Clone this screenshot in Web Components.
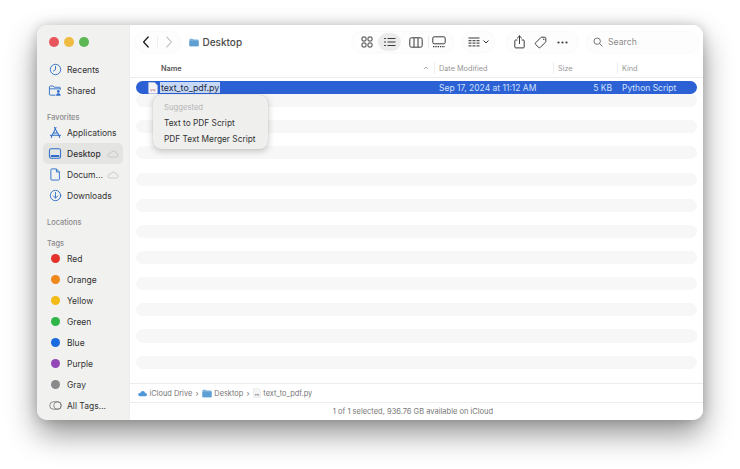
<!DOCTYPE html>
<html lang="en"><head><meta charset="utf-8"><title>Finder</title>
<style>
html,body{margin:0;height:100%;background:#fff;overflow:hidden}
body{padding:25px 37px 49px;box-sizing:border-box;font-family:Inter,"Liberation Sans",sans-serif;color:#2f2f2f}
</style></head><body>
<finder-window>
  <finder-sidebar slot="sidebar">
    <side-item icon="clock">Recents</side-item>
    <side-item icon="shared">Shared</side-item>
    <side-heading>Favorites</side-heading>
    <side-item icon="apps">Applications</side-item>
    <side-item icon="desktop" active cloud>Desktop</side-item>
    <side-item icon="doc" cloud>Docum...</side-item>
    <side-item icon="download">Downloads</side-item>
    <side-heading>Locations</side-heading>
    <side-heading>Tags</side-heading>
    <side-item tag="#e5322a">Red</side-item>
    <side-item tag="#f0891b">Orange</side-item>
    <side-item tag="#f2bb16">Yellow</side-item>
    <side-item tag="#2fb548">Green</side-item>
    <side-item tag="#1a6be0">Blue</side-item>
    <side-item tag="#9346b8">Purple</side-item>
    <side-item tag="#8a8a8c">Gray</side-item>
    <side-item icon="alltags">All Tags...</side-item>
  </finder-sidebar>
  <finder-toolbar slot="main"></finder-toolbar>
  <list-header slot="main"></list-header>
  <file-list slot="main"></file-list>
  <path-bar slot="main"></path-bar>
  <status-bar slot="main">1 of 1 selected, 936.76 GB available on iCloud</status-bar>
</finder-window>
<script>
const def=(n,html)=>{customElements.define(n,class extends HTMLElement{
  connectedCallback(){ if(this.shadowRoot) return; const r=this.attachShadow({mode:'open'}); r.innerHTML=typeof html==='function'?html(this):html; }
});};
const py=(w,h,c)=>`<svg viewBox="0 0 10 12" width="${w}" height="${h}" fill="none"><path d="M.6.5h6L9.4 3.2V11q0 .5-.5.5H1.1q-.5 0-.5-.5z" fill="#f5f5f7" stroke="#d6d6da" stroke-width=".5"/><path d="M2.6 7.2l.9 2 .9-2M5.4 7.2l.9 2 .9-2" stroke="${c}" stroke-width=".7"/></svg>`;
const I={
clock:'<svg viewBox="0 0 14 14" width="13" height="13" fill="none" stroke="#2f6fc9" stroke-width="1"><circle cx="7" cy="7" r="5.6"/><path d="M7 3.6V7.2L4.8 8.6" stroke-linecap="round"/></svg>',
shared:'<svg viewBox="0 0 14 14" width="14" height="13" fill="none" stroke="#2f6fc9" stroke-width="1"><path d="M1 11.5V3.2q0-1 1-1h3l1.2 1.3h5.6q1 0 1 1V6"/><path d="M1 5.2h12"/><path d="M1 11.5q0 .5 1 .5h5.6"/><circle cx="10.6" cy="8" r="1.5" fill="#2f6fc9" stroke="none"/><path d="M8 12.6q.3-2.8 2.6-2.8t2.6 2.8z" fill="#2f6fc9" stroke="none"/></svg>',
apps:'<svg viewBox="0 0 14 14" width="13" height="13" fill="none" stroke="#2f6fc9" stroke-width="1.1" stroke-linecap="round"><path d="M7.6 1.5 3.4 10M5.9 1.5 10.6 10M1.5 10h11M3.4 10l-1 2.4M10.6 10l1 2.4M4.5 7.5h5"/></svg>',
desktop:'<svg viewBox="0 0 14 14" width="14" height="13" fill="none" stroke="#2f6fc9" stroke-width="1.1"><rect x="1" y="2" width="12" height="10" rx="1.8"/><rect x="2.4" y="8.6" width="9.2" height="2.2" fill="#2f6fc9" stroke="none" rx=".4"/></svg>',
doc:'<svg viewBox="0 0 14 14" width="13" height="13" fill="none" stroke="#2f6fc9" stroke-width="1" stroke-linejoin="round"><path d="M3 1h5l3.2 3.3V12q0 1-1 1H3q-1 0-1-1V2q0-1 1-1z"/><path d="M8 1v3.3h3.2"/></svg>',
download:'<svg viewBox="0 0 14 14" width="13" height="13" fill="none" stroke="#2f6fc9" stroke-width="1" stroke-linecap="round" stroke-linejoin="round"><circle cx="7" cy="7" r="5.6"/><path d="M7 3.7v6M4.8 7.5 7 9.8l2.2-2.3"/></svg>',
alltags:'<svg viewBox="0 0 14 10" width="13" height="9" fill="none" stroke="#777" stroke-width=".9"><rect x=".6" y=".8" width="12.8" height="8.4" rx="4.2"/><circle cx="9.2" cy="5" r="4.2"/></svg>',
cloud:'<svg viewBox="0 0 14 9" width="12" height="8" fill="none" stroke="#bdbdbd" stroke-width=".8"><path d="M3.5 8h7.2q2.4 0 2.4-2.1 0-1.9-2.2-2.1Q10.2 1 7.6 1 5.2 1 4.6 3.3 1 3.4 1 5.8 1 8 3.5 8z"/></svg>',
folder:'<svg viewBox="0 0 12 10" width="10" height="9"><path d="M.5 1.5q0-1 1-1h3l1 1h5q1 0 1 1v6q0 1-1 1h-9q-1 0-1-1z" fill="#7fb4dd"/><path d="M.5 3h11v5.5q0 1-1 1h-9q-1 0-1-1z" fill="#5ea0d3"/></svg>'
};
def('finder-window',`<style>
:host{display:flex;height:395px;border-radius:10px;overflow:hidden;background:#fff;box-shadow:0 14px 30px rgba(0,0,0,.42),0 0 12px rgba(0,0,0,.18)}
.s{flex:0 0 93px;display:flex;min-width:0}
.m{flex:1;display:flex;flex-direction:column;min-width:0;position:relative}
::slotted(*){min-width:0}
</style><div class="s"><slot name="sidebar"></slot></div><div class="m"><slot name="main"></slot><suggest-menu></suggest-menu></div>`);
def('traffic-lights',`<style>
:host{display:flex;gap:5.2px;height:34px;align-items:center;padding:0 0 0 12px;box-sizing:border-box;flex:none}
i{width:9.8px;height:9.8px;border-radius:50%}
</style><i style="background:#e9555c"></i><i style="background:#efbb41"></i><i style="background:#5cb755"></i>`);
def('finder-sidebar',`<style>
:host{display:flex;flex-direction:column;width:93px;height:100%;background:#f1f1f0;box-sizing:border-box;border-right:1px solid #ececec}
</style><traffic-lights></traffic-lights><slot></slot>`);
def('side-heading',`<style>
:host{display:flex;height:21px;align-items:flex-end;padding:0 0 .5px 10px;box-sizing:border-box;font-size:7.4px;font-weight:500;color:#8a8a8a}
</style><slot></slot>`);
def('side-item',h=>{
 const tag=h.getAttribute('tag');const ic=h.getAttribute('icon');
 const glyph=tag?`<b style="width:9px;height:9px;border-radius:50%;background:${tag}"></b>`:I[ic];
 return `<style>
:host{display:block;height:21px;padding:0 6px;box-sizing:border-box}
.r{display:flex;align-items:center;height:21px;border-radius:5px;font-size:8.5px;color:#333;${h.hasAttribute('active')?'background:#e4e4e3;font-weight:500;':''}}
.g{flex:0 0 24px;display:flex;justify-content:center;align-items:center}
.t{white-space:nowrap}
.c{margin-left:auto;padding-right:4px;display:flex}
</style><div class="r"><span class="g">${glyph}</span><span class="t"><slot></slot></span>${h.hasAttribute('cloud')?`<span class="c">${I.cloud}</span>`:''}</div>`;
});
const ic=(w,h,body)=>`<svg viewBox="0 0 ${w} ${h}" width="${w}" height="${h}" fill="none" stroke="#3a3a3a" stroke-width="1">${body}</svg>`;
def('finder-toolbar',`<style>
:host{display:flex;align-items:center;height:34px;flex:none;padding-left:5px;box-sizing:border-box;background:#fff}
.p{display:flex;align-items:center;height:20px;border-radius:10px;background:#fdfdfd;box-shadow:0 0 3px rgba(0,0,0,.06)}
.nav{width:45px;justify-content:center;gap:0}
.nav span{width:22px;display:flex;justify-content:center}
.nav em{width:1px;height:12px;background:#eee}
.title{display:flex;align-items:center;gap:3.5px;margin-left:9px;font-size:10px;font-weight:500;color:#4a4a4a;width:163px}
.views{width:101px;padding-left:3px;box-sizing:border-box}
.views span{display:flex;justify-content:center;align-items:center;height:18px;border-radius:9px;width:23px}
.views span.on{background:#ececec}
.views span.col{width:24px;padding-left:3px}
.views span.gal{width:20px}
.views em{width:1px;height:12px;background:#eaeaea}
.group{width:31px;margin-left:10px;justify-content:center;gap:3px}
.act{width:71px;margin-left:13px;padding-left:6.5px;box-sizing:border-box;gap:9.5px}
.search{width:111px;margin-left:9px;font-size:8.7px;color:#8c8c8c;gap:5px;padding-left:6px;box-sizing:border-box}
</style>
<div class="p nav"><span>${ic(8,12,'<path d="M6.2 1 1.6 6l4.6 5" stroke="#1f1f1f" stroke-width="1.3" stroke-linecap="round" stroke-linejoin="round"/>')}</span><em></em><span>${ic(8,12,'<path d="M1.8 1 6.4 6l-4.6 5" stroke="#b5b5b5" stroke-width="1.1" stroke-linecap="round" stroke-linejoin="round"/>')}</span></div>
<div class="title">${I.folder}<span>Desktop</span></div>
<div class="p views">
 <span>${ic(12,12,'<rect x="1" y="1" width="4" height="4" rx="1"/><rect x="7" y="1" width="4" height="4" rx="1"/><rect x="1" y="7" width="4" height="4" rx="1"/><rect x="7" y="7" width="4" height="4" rx="1"/>')}</span>
 <span class="on">${ic(12,10,'<path d="M3.5 1.5H11.5M3.5 5H11.5M3.5 8.5H11.5"/><path d="M.5 1.5h1M.5 5h1M.5 8.5h1" stroke-linecap="round"/>')}</span>
 <span class="col">${ic(14,11,'<rect x=".8" y=".8" width="12.4" height="9.4" rx="1.6"/><path d="M5 1v9M9 1v9"/>')}</span><em></em>
 <span class="gal">${ic(14,12,'<rect x=".8" y=".8" width="12.4" height="7" rx="1.4"/><path d="M1 10.6h12" stroke-dasharray="1.4 .9" stroke-width="1.2"/>')}</span>
</div>
<div class="p group">${ic(12,11,'<path d="M.5 1h11" stroke-width="1.2"/><path d="M.5 3.6h11M.5 6.2h11M.5 8.8h11" stroke="#555" stroke-width="1.3" stroke-dasharray="3 1"/>')}${ic(6,4,'<path d="M.8.8 3 3 5.2.8" stroke-width="1" stroke-linecap="round"/>')}</div>
<div class="p act">
 ${ic(11,14,'<path d="M3 5H1.6q-.8 0-.8.8V12q0 .9.9.9h7.6q.9 0 .9-.9V5.8q0-.8-.8-.8H8M5.5 8.6V1M3.4 3 5.5 1l2.1 2" stroke-linecap="round" stroke-linejoin="round"/>')}
 ${ic(13,13,'<path d="M7.6 1.2h3q1.2 0 1.2 1.2v3q0 .6-.5 1l-5 5q-.8.7-1.6 0L1.6 8.4q-.7-.8 0-1.6l5-5q.4-.6 1-.6z" stroke-linejoin="round"/><circle cx="9.8" cy="3.3" r=".7" fill="#3a3a3a" stroke="none"/>')}
 ${ic(11,3,'<circle cx="1.5" cy="1.5" r="1.1" fill="#3a3a3a" stroke="none"/><circle cx="5.5" cy="1.5" r="1.1" fill="#3a3a3a" stroke="none"/><circle cx="9.5" cy="1.5" r="1.1" fill="#3a3a3a" stroke="none"/>')}
</div>
<div class="p search">${ic(10,10,'<circle cx="4.2" cy="4.2" r="3.2" stroke="#777"/><path d="M6.6 6.6 9.2 9.2" stroke="#777" stroke-linecap="round"/>')}<span>Search</span></div>`);
def('list-header',`<style>
:host{display:grid;grid-template-columns:304px 119px 64px 1fr;flex:none;font-size:7.3px;color:#969696;border-bottom:1px solid #ececec;align-items:center;height:18px;background:#fff}
div{display:flex;align-items:center;height:12px;padding-left:4px;border-left:1px solid #eee}
div:first-of-type{border:0;padding-left:31px;font-weight:600;color:#555;justify-content:space-between;padding-right:5px}
</style><div>Name${ic(6,4,'<path d="M.8 3.2 3 1l2.2 2.2" stroke="#9a9a9a" stroke-width=".8"/>')}</div><div>Date Modified</div><div>Size</div><div>Kind</div>`);
def('file-row',h=>h.hasAttribute('selected')?`<style>
:host{display:grid;grid-template-columns:303px 173px 1fr;height:13.08px;align-items:center;border-radius:6.5px;background:#2c61d5;font-size:8.5px;color:#cfe0fa}
.n{display:flex;align-items:center;height:13px;padding-left:11.5px}
.n svg{margin-right:2.5px}
.n span{background:#c6d8f6;color:#1c2a44;padding:0 1px;line-height:11.5px;font-size:8.8px}
.s{text-align:right}.k{padding-left:10px}
</style><div class="n">${py(10,12,'#c0688c')}<span>text_to_pdf.py</span></div><div class="s"><span style="float:left">Sep 17, 2024 at 11:12 AM</span>5 KB</div><div class="k">Python Script</div>`:
`<style>:host{display:block;height:13.08px;border-radius:6.5px;${h.hasAttribute('stripe')?'background:#f7f7f7;':''}}</style>`);
def('file-list',h=>`<style>
:host{display:flex;flex-direction:column;flex:1;padding:3px 6px 0;min-height:0;overflow:hidden;background:#fff}
</style><file-row selected></file-row>${Array.from({length:22},(_,i)=>`<file-row ${i%2==0?'stripe':''}></file-row>`).join('')}`);
def('path-bar',`<style>
:host{display:flex;align-items:center;gap:2.5px;height:20px;flex:none;padding-left:8px;box-sizing:border-box;border-top:1px solid #ececec;border-bottom:1px solid #ececec;font-size:7.4px;color:#777;background:#fff}
.gt{font-size:8px;margin:0 .75px}
</style><svg viewBox="0 0 10 7" width="9" height="7"><path d="M2.4 6.6h5.4Q10 6.6 10 4.8 10 3 8 3 7.5.6 5.2.6 3.2.6 2.8 2.6.2 2.7.2 4.7q0 1.9 2.2 1.9z" fill="#4f97d8"/></svg><span>iCloud Drive</span><span class="gt">›</span>${I.folder}<span>Desktop</span><span class="gt">›</span>${py(8,10,'#666')}<span>text_to_pdf.py</span>`);
def('status-bar',`<style>
:host{display:flex;align-items:center;justify-content:center;flex:1 0 17px;max-height:17px;padding-right:7px;font-size:7.5px;color:#777;background:#fff}
</style><slot></slot>`);
def('suggest-menu',`<style>
:host{position:absolute;left:23px;top:70px;width:115px;height:54px;box-sizing:border-box;border-radius:8px;background:#efefee;box-shadow:0 2px 7px rgba(0,0,0,.22),0 0 1px rgba(0,0,0,.2);padding:6px 11px;font-size:8.3px;color:#333}
div{height:16px;line-height:16px;white-space:nowrap}
.h{color:#b4b4b4;font-size:7.7px;height:14px;line-height:14px;margin-bottom:0}
</style><div class="h">Suggested</div><div>Text to PDF Script</div><div>PDF Text Merger Script</div>`);
</script>
</body></html>
